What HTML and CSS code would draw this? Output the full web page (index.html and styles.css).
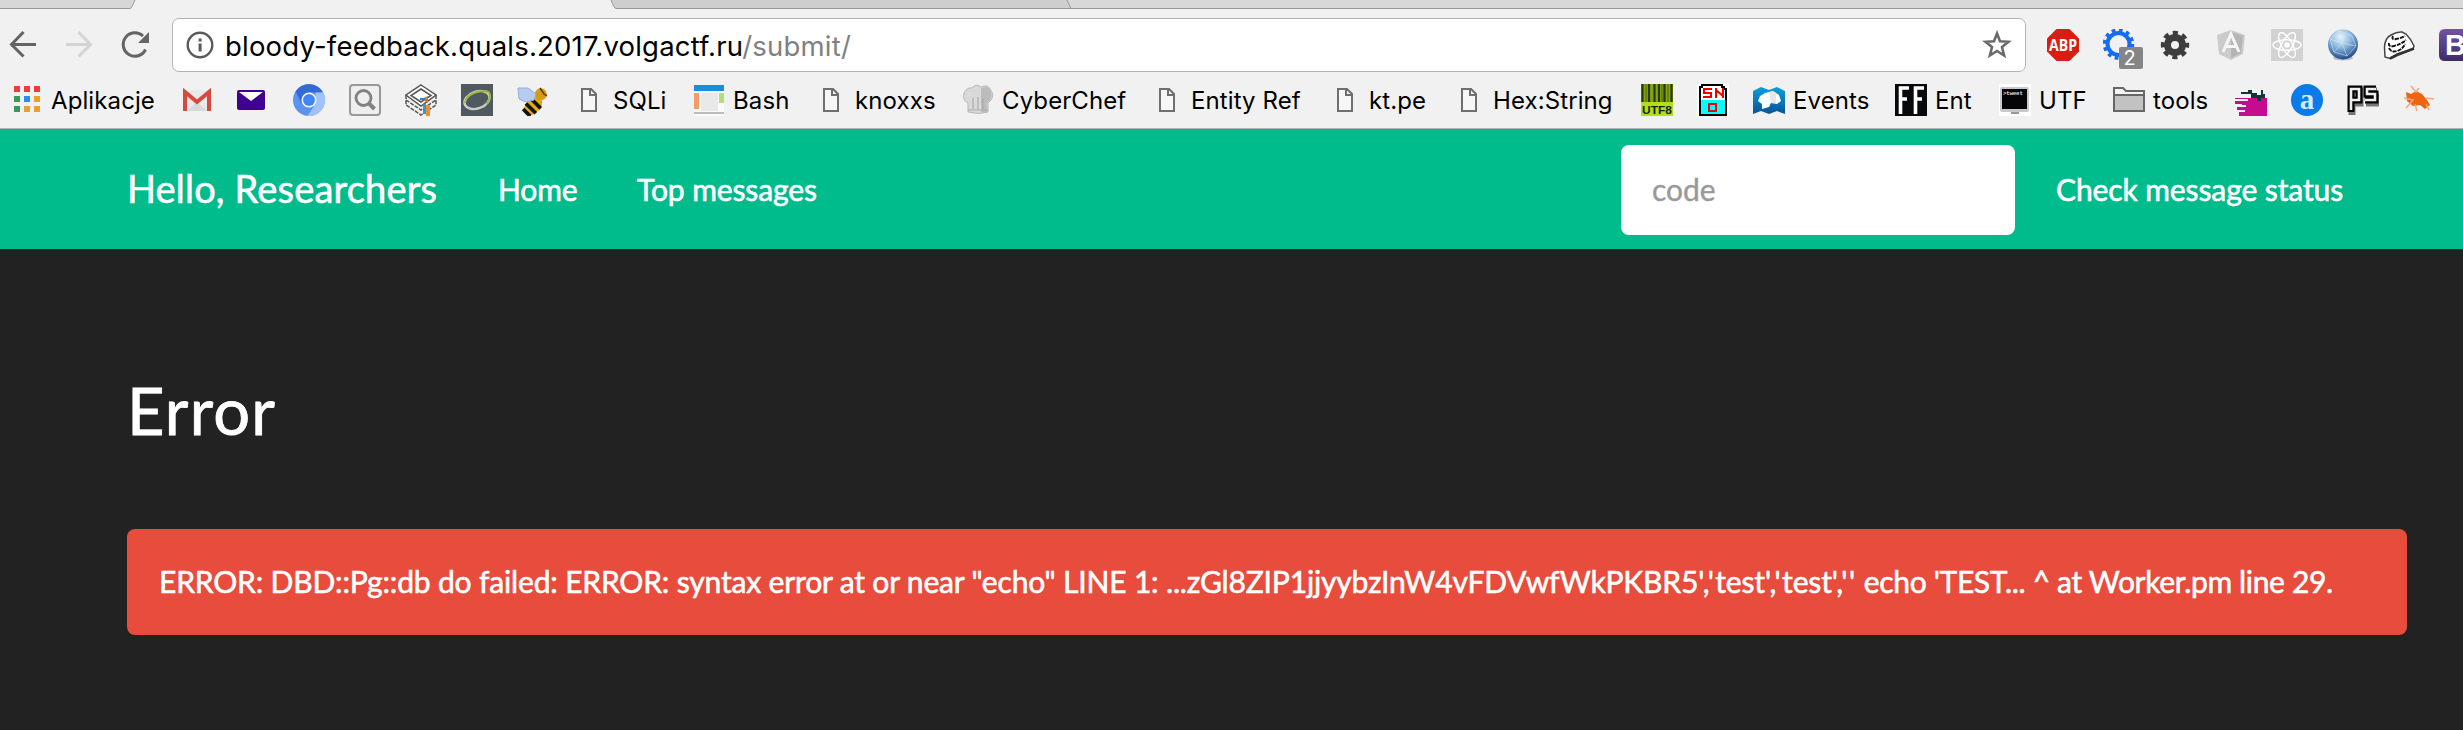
FILE: index.html
```html
<!DOCTYPE html>
<html lang="pl">
<head>
<meta charset="utf-8">
<title>Error</title>
<link rel="stylesheet" href="styles.css">
</head>
<body>
<header class="chrome">
  <svg class="tabs" viewBox="0 0 2463 9" width="2463" height="9">
    <path d="M0 0H135L131 8.500H0Z" fill="#d7d7d7"/><path d="M0 8.500H130Q131.500 8.500 135 0" fill="none" stroke="#999"/>
    <path d="M611 0L615 8.500H1071L1067 0Z" fill="#cecece"/><path d="M1067 0L1071 8.500H2463V0Z" fill="#d8d8d8"/>
    <path d="M611 0Q614 8.500 616 8.500H2463M1067 0L1071 8.500" fill="none" stroke="#999"/>
  </svg>
  <div class="toolbar">
    <svg class="nav" viewBox="0 0 172 54" width="172" height="54">
      <g fill="none" stroke-width="3"><path d="M36 26.500H12M23.500 14L11.500 26.500L23.500 38.500" stroke="#646464"/><path d="M66 26.500H90M78.500 14L90.500 26.500L78.500 38.500" stroke="#d4d4d4"/><path d="M145.500 31.500A11.700 11.700 0 1 1 143 18" stroke="#646464"/></g>
      <path d="M149 14V25H138Z" fill="#646464"/>
    </svg>
    <div class="omnibox">
      <svg width="28" height="28" viewBox="0 0 28 28"><circle cx="14" cy="14" r="12.300" fill="none" stroke="#5a5a5a" stroke-width="2.400"/><path d="M12.600 7.500h3v3h-3zM12.600 12.500h3v8h-3z" fill="#5a5a5a"/></svg>
      <div class="url"><span class="host">bloody-feedback.quals.2017.volgactf.ru</span><span class="path">/submit/</span></div>
      <svg class="star" width="30" height="30" viewBox="0 0 30 30"><path d="M15 3.500L18 11.300L26.500 11.800L20 17.100L22.100 25.500L15 21L7.900 25.500L10 17.100L3.500 11.800L12 11.300Z" fill="none" stroke="#6a6a6a" stroke-width="2.600"/></svg>
    </div>
    <div class="extensions">
      <svg width="32" height="32" viewBox="0 0 32 32"><path d="M9.500 0H22.500L32 9.500V22.500L22.500 32H9.500L0 22.500V9.500Z" fill="#d81e13"/><text x="16" y="21.500" text-anchor="middle" textLength="28" lengthAdjust="spacingAndGlyphs" class="abp">ABP</text></svg>
      <div class="ext">
        <svg width="32" height="32" viewBox="0 0 32 32"><circle cx="15.500" cy="15" r="11" fill="none" stroke="#156cf4" stroke-width="4"/><circle cx="15.500" cy="15" r="14" fill="none" stroke="#156cf4" stroke-width="3.500" stroke-dasharray="3.700 3.630"/></svg>
        <span class="badge">2</span>
      </div>
      <svg width="32" height="32" viewBox="0 0 32 32"><circle cx="16" cy="16" r="7.500" fill="none" stroke="#3d3d3d" stroke-width="7"/><circle cx="16" cy="16" r="12.200" fill="none" stroke="#3d3d3d" stroke-width="4" stroke-dasharray="5.200 4.382" stroke-dashoffset="2.600"/></svg>
      <svg width="32" height="32" viewBox="0 0 32 32"><path d="M16 1L30 6L28 25L16 31L4 25L2 6Z" fill="#cbcbcb"/><path d="M16 3V29L26 24L28 7Z" fill="#b5b5b5"/><path d="M8 23L16 5L24 23M11 17.500H21" fill="none" stroke="#f5f5f5" stroke-width="3"/></svg>
      <svg width="32" height="32" viewBox="0 0 32 32"><path d="M0 0H32V32H0Z" fill="#d2d2d2"/><g fill="none" stroke="#fff" stroke-width="1.400"><ellipse cx="16" cy="16" rx="14" ry="5.300"/><ellipse cx="16" cy="16" rx="14" ry="5.300" transform="rotate(60 16 16)"/><ellipse cx="16" cy="16" rx="14" ry="5.300" transform="rotate(120 16 16)"/></g><circle cx="16" cy="16" r="2.800" fill="#fff"/></svg>
      <svg width="32" height="32" viewBox="0 0 32 32"><defs><radialGradient id="globe" cx=".42" cy=".25" r=".75"><stop offset="0" stop-color="#eaf5fc"/><stop offset=".45" stop-color="#8ebbe0"/><stop offset="1" stop-color="#214c8a"/></radialGradient></defs><ellipse cx="16" cy="29" rx="10" ry="2.500" fill="#b9bec5"/><circle cx="16" cy="15.500" r="15" fill="url(#globe)"/><path d="M3 10L12 2L25 7L29 17L20 27L7 23ZM12 2L15 14L3 10M15 14L29 17M15 14L7 23M15 14L20 27" fill="none" stroke="#d6eafa" stroke-width=".8" opacity=".7"/></svg>
      <svg width="32" height="32" viewBox="0 0 32 32"><path d="M1.500 18Q2 9 8 6Q14 2.500 19 3L23 5Q28 10 31 17L30 20L14 25L7 29.500L2 28Z" fill="#fff" stroke="#444" stroke-width="1.500"/><path d="M7 29.500L14 26L31 19.500" fill="none" stroke="#333" stroke-width="2.600"/><path d="M10 7Q8 11 13 10Q19 9 22 7M6 14Q5 18 11 17Q19 15 23 11M6 19Q8 24 14 22Q20 20 22 15" fill="none" stroke="#111" stroke-width="1.900" stroke-dasharray="4 1"/></svg>
      <svg width="24" height="32" viewBox="0 0 24 32"><defs><linearGradient id="boot" x2="0" y2="1"><stop stop-color="#7353a0"/><stop offset="1" stop-color="#3f2b68"/></linearGradient></defs><path d="M6 0H24V32H6Q0 32 0 26V6Q0 0 6 0Z" fill="url(#boot)"/><text x="6" y="26" class="bs">B</text></svg>
    </div>
  </div>
  <nav class="bookmarks">
    <div class="bm"><svg width="32" height="32" viewBox="0 0 32 32"><path d="M3 2h6v6H3zM13 2h6v6h-6zM23 2h6v6h-6z" fill="#f23a3a"/><path d="M3 12h6v6H3zM3 22h6v6H3z" fill="#389a59"/><path d="M13 12h6v6h-6z" fill="#2a8cf4"/><path d="M23 12h6v6h-6zM13 22h6v6h-6zM23 22h6v6h-6z" fill="#eda027"/></svg><span class="w-apps">Aplikacje</span></div>
    <svg width="32" height="32" viewBox="0 0 32 32"><path d="M2 6H30V27H2Z" fill="#e9e9e9"/><path d="M6 27L16 18L26 27Z" fill="#d8d8d8"/><path d="M4 27V8L16 18L28 8V27" fill="none" stroke="#d8483c" stroke-width="4"/></svg>
    <svg width="32" height="32" viewBox="0 0 32 32"><rect y="6" width="28" height="20" rx="2" fill="#400090"/><path d="M2 8H26L14 17Z" fill="#fff"/></svg>
    <svg width="32" height="32" viewBox="0 0 32 32"><circle cx="16" cy="16" r="16" fill="#5b93ef"/><path d="M2.500 7.500A16 16 0 0 1 30 8.500H16L9 20Z" fill="#356ad6"/><path d="M30 8.500A16 16 0 0 1 14.500 32L22.500 20V8.500Z" fill="#a1c2fa"/><circle cx="16" cy="16" r="7.500" fill="#fff"/><circle cx="16" cy="16" r="6" fill="#4285f4"/></svg>
    <svg width="32" height="32" viewBox="0 0 32 32"><rect x="1" y="1" width="30" height="30" rx="3" fill="#efefef" stroke="#999" stroke-width="2"/><circle cx="14.500" cy="14" r="7.500" fill="none" stroke="#828282" stroke-width="2.800"/><path d="M19.500 19L25.500 25" stroke="#828282" stroke-width="4"/></svg>
    <svg width="32" height="32" viewBox="0 0 32 32"><g fill="none" stroke="#555" stroke-width="1.500"><path d="M16 1L31 11L16 22L1 11Z" fill="#fff"/><path d="M16 5L26 11.500L16 18L6 11.500Z"/><path d="M1 11V21L16 31L31 21V11M1 16L16 26L31 16" stroke-dasharray="4 1.200"/></g><path d="M21 21h4v11h-4z" fill="#f58a2a"/><path d="M18 20h3v10h-3z" fill="#2f9ad4"/><path d="M16 15L23 12V19Z" fill="#e86e22"/><path d="M15 15H20" stroke="#2785c8" stroke-width="2"/></svg>
    <svg width="32" height="32" viewBox="0 0 32 32"><path d="M0 0H32V32H0Z" fill="#505860"/><ellipse cx="16" cy="16" rx="13" ry="8.500" transform="rotate(-20 16 16)" fill="none" stroke="#c8cdc8" stroke-width="2.400"/><path d="M4 19Q5 11 16 8Q28 5 29 11Q29 16 25 20" fill="none" stroke="#9bb83e" stroke-width="2"/></svg>
    <svg width="32" height="32" viewBox="0 0 32 32"><g transform="rotate(-45 16 18)"><ellipse cx="13" cy="21" rx="11" ry="7" fill="#e9a713"/><circle cx="27" cy="18" r="6" fill="#d79a12"/><path d="M4 16V26M10 14V28M17 15V28" stroke="#15120c" stroke-width="3.600"/></g><path d="M1 4L11 4L19 10L17 16L9 18L2 15Z" fill="#b6ccf4" stroke="#9aaccc"/><path d="M23 4L27 10L30 12" fill="none" stroke="#493a11" stroke-width="1.500"/></svg>
    <div class="bm"><svg width="32" height="32" viewBox="0 0 32 32"><path d="M9 5H18L23 10V27H9ZM17 5V11H23" fill="#f7f7f7" stroke="#6f6f6f" stroke-width="2"/></svg><span class="w-sqli">SQLi</span></div>
    <div class="bm"><svg width="32" height="32" viewBox="0 0 32 32"><path d="M1 1H31V32H1Z" fill="#fafafa"/><path d="M1 1H31V7H1Z" fill="#168fdc"/><path d="M1 9h5v16H1z" fill="#f79a6a"/><path d="M8 9h17v18H8z" fill="#e9e9e9"/><path d="M26 9h5v10h-5z" fill="#b5dc80"/><path d="M1 28h30v2H1z" fill="#bcbcbc"/></svg><span class="w-bash">Bash</span></div>
    <div class="bm"><svg width="32" height="32" viewBox="0 0 32 32"><path d="M9 5H18L23 10V27H9ZM17 5V11H23" fill="#f7f7f7" stroke="#6f6f6f" stroke-width="2"/></svg><span class="w-knoxxs">knoxxs</span></div>
    <div class="bm"><svg width="32" height="32" viewBox="0 0 32 32"><path d="M6 28V19Q0 16 2 9Q5 3 10 4Q14 -1 19 3Q26 0 28 5Q33 11 29 16L26 19V28Q16 31 6 28Z" fill="#d9d9d9" stroke="#b8b8b8"/><path d="M19 4Q26 1 28 6Q31 12 28 16L25 19V28H19Z" fill="#bcbcbc"/><path d="M11 14V25M16 13V25M21 14V25M6 26H26" stroke="#aaa" stroke-width="1.200"/></svg><span class="w-chef">CyberChef</span></div>
    <div class="bm"><svg width="32" height="32" viewBox="0 0 32 32"><path d="M9 5H18L23 10V27H9ZM17 5V11H23" fill="#f7f7f7" stroke="#6f6f6f" stroke-width="2"/></svg><span class="w-entity">Entity Ref</span></div>
    <div class="bm"><svg width="32" height="32" viewBox="0 0 32 32"><path d="M9 5H18L23 10V27H9ZM17 5V11H23" fill="#f7f7f7" stroke="#6f6f6f" stroke-width="2"/></svg><span class="w-kt">kt.pe</span></div>
    <div class="bm"><svg width="32" height="32" viewBox="0 0 32 32"><path d="M9 5H18L23 10V27H9ZM17 5V11H23" fill="#f7f7f7" stroke="#6f6f6f" stroke-width="2"/></svg><span class="w-hex">Hex:String</span></div>
    <svg width="32" height="32" viewBox="0 0 32 32"><path d="M0 0H32V32H0Z" fill="#b1df18"/><path d="M0 0H32V18H0Z" fill="#83a513"/><path d="M1.500 0V18M8 0V18M13.500 0V18M18 0V18M23.500 0V18M30.500 0V18" stroke="#2c3903" stroke-width="2.200"/><path d="M5 0V18M21 0V18M27 0V18" stroke="#506708"/><text x="1" y="29.500" textLength="30" lengthAdjust="spacingAndGlyphs" class="utf8">UTF8</text></svg>
    <svg width="32" height="32" viewBox="0 0 32 32"><path d="M0 0H32V32H0Z" fill="#fff"/><path d="M3 5V3H5V1H25V3H27V5H29V31H3Z" fill="#fff" stroke="#000" stroke-width="2"/><path d="M4 16H28V30H4Z" fill="#0ff"/><path d="M15 5H7V9H14V13H6M19 14V4M19 6L26 12M26 4V14M12 20H19V27H12Z" fill="none" stroke="#e00" stroke-width="2"/></svg>
    <div class="bm"><svg width="32" height="32" viewBox="0 0 32 32"><defs><linearGradient id="map" x2="0" y2="1"><stop stop-color="#0ba0dc"/><stop offset="1" stop-color="#075497"/></linearGradient></defs><path d="M0 7L8 3L16 6L24 3L32 7V30L24 27L16 30L8 27L0 30Z" fill="url(#map)"/><path d="M12 9L20 7L26 11L28 17L24 20L18 19L16 23L9 25V20L5 17L7 12Z" fill="#fff"/><path d="M16 8L20 7L23 9V19L18 19Z" fill="#e7e7e7"/></svg><span class="w-events">Events</span></div>
    <div class="bm"><svg width="32" height="32" viewBox="0 0 32 32"><path d="M0 0H32V32H0Z" fill="#08090c"/><path d="M5.500 30V4H14M5.500 15H12M20.500 30V4H29M20.500 15H27" fill="none" stroke="#fff" stroke-width="3.600"/></svg><span class="w-ent">Ent</span></div>
    <div class="bm"><svg width="32" height="32" viewBox="0 0 32 32"><path d="M0 0H32V32H0Z" fill="#fff"/><rect x="1" y="3" width="29" height="25" rx="2" fill="#c8c8ce"/><path d="M3 5H28V25H3Z" fill="#050505"/><path d="M12 29H20" stroke="#999" stroke-width="2"/><text x="4" y="11" textLength="20" class="tweet">&gt;tweet</text></svg><span class="w-utf">UTF</span></div>
    <div class="bm"><svg width="32" height="32" viewBox="0 0 32 32"><path d="M1 27V4H10L13 7H31V27Z" fill="#f5f5f5" stroke="#666" stroke-width="2"/><path d="M1 11H31V27H1Z" fill="#c2c2c2" stroke="#666" stroke-width="2"/></svg><span class="w-tools">tools</span></div>
    <svg width="32" height="32" viewBox="0 0 32 32"><path d="M0 14H32V32H4V28H8V26H2V22H7V20H0Z" fill="#c60b91"/><path d="M0 16H13M2 22H11M4 27H10" stroke="#f1f1f1" stroke-width="2"/><path d="M6 8H13V6H17V9H22V11H26V6H28V10H30V14H26V17H22V14H16V10H6Z" fill="#12343b"/></svg>
    <svg width="32" height="32" viewBox="0 0 32 32"><circle cx="16" cy="16" r="16" fill="#0b7bea"/><text x="16" y="24.500" text-anchor="middle" class="aletter">a</text></svg>
    <svg width="32" height="32" viewBox="0 0 32 32"><path d="M4 30V6H12V18H4M29 6H20V12H28V18H18" transform="translate(1 1)" fill="none" stroke="#777" stroke-width="7"/><path d="M4 28V5H12V16H5M29 5H20V10H28V16H18" fill="none" stroke="#000" stroke-width="7"/><path d="M4 26V5H12V16H5M29 5H20V10H28V16H18" fill="none" stroke="#eee" stroke-width="2.600"/></svg>
    <svg width="32" height="32" viewBox="0 0 32 32"><path d="M3 8L8 10L13 7L19 10L24 16L27 21L22 25L17 21L10 22L4 17Z" fill="#ef6410"/><path d="M8 2L13 8L16 4M1 14L10 16L3 24M12 20L14 27M22 14L31 15M23 20L26 26" fill="none" stroke="#f3a77c" stroke-width="1.500"/></svg>
  </nav>
</header>
<nav class="navbar">
  <a class="brand">Hello, Researchers</a>
  <a class="home">Home</a>
  <a class="top">Top messages</a>
  <form class="status"><input class="code" placeholder="code"><a class="check">Check message status</a></form>
</nav>
<main class="content">
  <h2 class="title">Error</h2>
  <div class="alert"><span class="message">ERROR: DBD::Pg::db do failed: ERROR: syntax error at or near "echo" LINE 1: ...zGl8ZIP1jjyybzInW4vFDVwfWkPKBR5<span class="quotes">','</span>test<span class="quotes">','</span>test<span class="quotes">',''</span><span class="tail"> echo 'TEST... ^ at Worker.pm line 29.</span></span></div>
</main>
</body>
</html>
```
FILE: styles.css
```css
* { box-sizing: border-box; }
html, body { margin: 0; }
body { width: 2463px; height: 730px; overflow: hidden; background: #222; color: #fff; font-family: Lato, sans-serif; font-size: 30px; }
svg { display: block; flex: none; }
.chrome { height: 129px; background: #f1f1f1; border-bottom: 1px solid #b2b2b2; color: #000; font-family: Inter, sans-serif; overflow: hidden; }
.tabs { height: 9px; }
.toolbar { display: flex; align-items: center; height: 54px; margin-top: 9px; }
.omnibox { display: flex; align-items: center; width: 1854px; height: 54px; padding: 0 13px; border: 1px solid #b4b4b4; border-radius: 7px; background: #fff; }
.url { flex: 1; padding-left: 11px; padding-top: 2px; font-size: 27.500px; letter-spacing: .2px; line-height: 34px; white-space: nowrap; }
.path { color: #808080; }
.extensions { display: flex; gap: 24px; margin-left: 21px; }
.ext { position: relative; }
.badge { position: absolute; left: 16px; top: 18px; width: 24px; height: 22px; border-radius: 2px; background: #858585; color: #fff; font-size: 20px; line-height: 22px; text-align: center; padding-right: 3px; }
.abp { font: bold 16px "Open Sans", sans-serif; fill: #fff; }
.bs { font: bold 29px "Liberation Sans", sans-serif; fill: #fff; }
.utf8 { font: bold 11px "Liberation Sans", sans-serif; fill: #171f00; }
.tweet { font: bold 6px "Liberation Mono", monospace; fill: #ddd; }
.aletter { font: bold 29px "Liberation Serif", serif; fill: #d5ecff; }
.bookmarks { display: flex; gap: 24px; margin: 12px 0 0 11px; height: 32px; }
.bm { display: flex; align-items: center; gap: 8px; height: 32px; font-size: 24px; line-height: 34px; white-space: nowrap; }
.bm span { padding-top: 2px; letter-spacing: .1px; }
.w-apps { width: 106px; }
.w-sqli { width: 56px; }
.w-bash { width: 58px; }
.w-knoxxs { width: 83px; }
.w-chef { width: 125px; }
.w-entity { width: 114px; }
.w-kt { width: 60px; }
.w-hex { width: 124px; }
.w-events { width: 78px; }
.w-ent { width: 40px; }
.w-utf { width: 50px; }
.w-tools { width: 58px; }
.navbar { display: flex; align-items: center; height: 120px; padding-left: 127px; background: #00bc8c; line-height: 40px; white-space: nowrap; }
.navbar a, .message { -webkit-text-stroke: .6px #fff; }
.brand { width: 371px; padding-bottom: 2px; font-size: 38px; letter-spacing: .18px; }
.home { width: 139px; letter-spacing: -.15px; }
.top, .check { letter-spacing: -.1px; }
.status { display: flex; align-items: center; width: 842px; margin-left: auto; }
.code { width: 394px; height: 90px; margin-top: 2px; padding: 0 31px 2px; border: 0; border-radius: 8px; background: #fff; font: 30px Lato, sans-serif; }
.code::placeholder { color: #999; opacity: 1; -webkit-text-stroke: .4px #999; }
.check { margin-left: 41px; }
.content { padding: 126px 56px 0 127px; }
.title { margin: 0; font-size: 65px; line-height: 70px; font-weight: 400; letter-spacing: 1.200px; -webkit-text-stroke: .8px #fff; }
.alert { display: flex; align-items: center; height: 106px; margin-top: 84px; padding: 0 32px 2px; border-radius: 8px; background: #e74c3c; white-space: nowrap; }
.message { letter-spacing: -.16px; }
.quotes { letter-spacing: 1.400px; }
.tail { letter-spacing: -.33px; }
```
